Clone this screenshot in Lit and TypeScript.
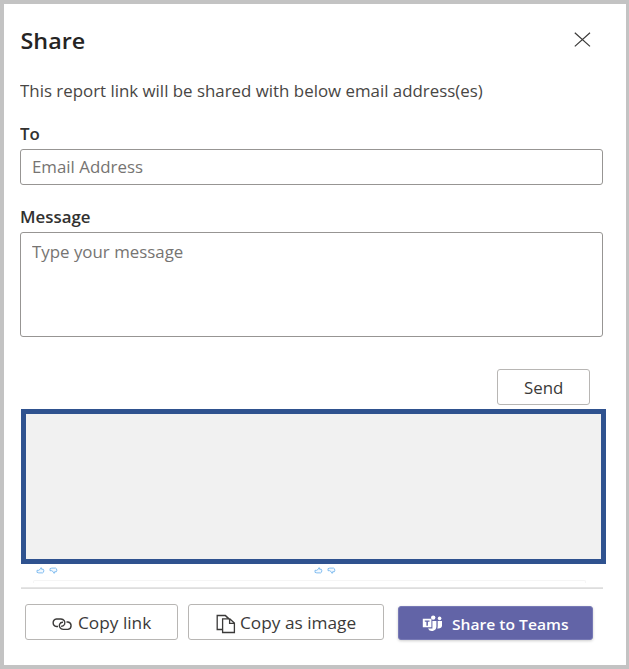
import { LitElement, html, css } from "lit";
import { customElement } from "lit/decorators.js";

@customElement("reaction-thumbs")
class ReactionThumbs extends LitElement {
  static styles = css`
    :host { display: flex; gap: 4px; }
    svg { display: block; width: 9px; height: 7px; fill: #f2f9ff; stroke: #78b8ee; stroke-width: 0.9; }
    .down { transform: rotate(180deg) scaleX(-1); }
  `;
  render() {
    const thumb = "M1 3.3H2.7L4.5 2 4.9.7Q6 .5 5.7 2.3H7.4Q8.2 2.6 7.5 5.2L6.6 5.9H2.8L1 5.4Z";
    return html`
      <svg viewBox="0 0 9 7"><path d=${thumb} /></svg>
      <svg class="down" viewBox="0 0 9 7"><path d=${thumb} /></svg>
    `;
  }
}

@customElement("app-root")
class AppRoot extends LitElement {
  static styles = css`
    :host {
      display: block;
      font-family: "Open Sans", "Noto Sans", sans-serif;
      font-size: 15.4px;
      color: #484644;
    }
    * { box-sizing: border-box; }
    svg { display: block; flex: none; }
    .wide { display: inline-block; transform: scaleX(1.096); transform-origin: 0 50%; white-space: nowrap; }
    .dialog {
      width: 629px;
      height: 669px;
      padding: 20px 0 0 16px;
      background: #fff;
      border: solid #c3c3c3;
      border-width: 4px 3px 4px 4px;
      display: flex;
      flex-direction: column;
      overflow: hidden;
    }
    .head {
      display: flex;
      justify-content: space-between;
      width: 571px;
      height: 32px;
      flex: none;
    }
    h1 {
      margin: 0;
      padding-left: 0.5px;
      font-size: 22px;
      line-height: 32px;
      font-weight: 600;
      color: #252423;
      transform: scaleX(1.06);
      transform-origin: 0 50%;
    }
    .close { margin-top: 7px; }
    p { margin: 25px 0 0; line-height: 22px; }
    label { display: block; font-weight: 600; line-height: 20px; height: 20px; color: #323130; }
    .to { margin-top: 22px; }
    .msg { margin-top: 23px; }
    .field {
      width: 583px;
      border: 1px solid #979593;
      border-radius: 3px;
      padding: 0 11px;
      color: #767472;
      flex: none;
    }
    .input { height: 36px; line-height: 36px; margin-top: 4px; }
    .area { height: 105px; margin-top: 4px; padding-top: 9px; line-height: 22px; }
    .btn {
      height: 36px;
      display: flex;
      align-items: center;
      border: 1px solid #b8b6b4;
      border-radius: 3px;
      white-space: nowrap;
      flex: none;
      color: #3b3a39;
    }
    .send { width: 93px; margin: 32px 0 0 477px; padding: 2px 0 0 26px; }
    .preview {
      width: 585px;
      height: 155px;
      flex: none;
      margin: 4px 0 0 1px;
      background: #f1f1f1;
      border: 5px solid #2f528f;
    }
    .thumbs { display: flex; gap: 256px; margin: 3px 0 0 16px; height: 13px; flex: none; }
    .card { width: 553px; height: 3px; margin-left: 13px; border: 1px solid #f5f5f5; border-bottom: 0; border-radius: 2px 2px 0 0; flex: none; }
    .rule { width: 582px; height: 2px; margin: 4px 0 0 1px; background: linear-gradient(#e9e9e9, #d9d9d9); flex: none; }
    .actions { display: flex; margin: 15px 0 0 5px; flex: none; }
    .link { width: 153px; padding-left: 25px; gap: 4.5px; }
    .link svg { margin-top: 4px; }
    .link .wide, .image .wide { transform: scaleX(1.12); margin-top: 2px; }
    .image { width: 196px; margin-left: 10px; padding-left: 27px; gap: 4px; }
    .image svg { margin-top: 4px; }
    .teams {
      width: 195px;
      height: 34px;
      margin: 2px 0 0 14px;
      padding-left: 22.5px;
      gap: 9px;
      background: #6264a7;
      border-color: #7779b5;
      color: #fff;
      font-size: 14.4px;
      font-weight: 600;
      box-shadow: 0 1px 3px #0003;
    }
    .teams .wide { transform: scaleX(1.085); margin-top: 3px; }
    .teams svg { margin-top: 1px; }
  `;

  render() {
    return html`
      <div class="dialog">
        <div class="head">
          <h1>Share</h1>
          <svg class="close" width="18" height="17" viewBox="0 0 18 17" fill="none" stroke="#3b3a39" stroke-width="1.2"><path d="M1.8 1.8 17 15.4M17 1.8 1.8 15.4" /></svg>
        </div>
        <p><span class="wide">This report link will be shared with below email address(es)</span></p>
        <label class="to"><span class="wide">To</span></label>
        <div class="field input"><span class="wide">Email Address</span></div>
        <label class="msg"><span class="wide">Message</span></label>
        <div class="field area"><span class="wide">Type your message</span></div>
        <div class="btn send"><span class="wide">Send</span></div>
        <div class="preview"></div>
        <div class="thumbs"><reaction-thumbs></reaction-thumbs><reaction-thumbs></reaction-thumbs></div>
        <div class="card"></div>
        <div class="rule"></div>
        <div class="actions">
          <div class="btn link">
            <svg width="22" height="14" viewBox="0 0 22 14" fill="none" stroke="#3b3a39" stroke-width="1.4">
              <path d="M7 9.5H5.5A4 3.8 0 0 1 5.5 2H10A4 3.8 0 0 1 13.6 7.2Q12.6 9.4 10.2 9.2" />
              <path d="M15.5 5H17A4 3.8 0 0 1 17 12.4H12.2A4 3.8 0 0 1 8.6 7.2Q9.6 5 12 5.2" />
            </svg>
            <span class="wide">Copy link</span>
          </div>
          <div class="btn image">
            <svg width="20" height="20" viewBox="0 0 20 20" fill="none" stroke="#3b3a39" stroke-width="1.3">
              <path d="M6.3 15.5H1.2V1.5H9.4L13 4.8M9.2 1.5 12.6 4.8" />
              <path d="M6.6 4.9H13.9L18.4 9V18.5H6.6ZM13.6 5V9.3H18.4" />
            </svg>
            <span class="wide">Copy as image</span>
          </div>
          <div class="btn teams">
            <svg width="21" height="17" viewBox="0 0 21 17" fill="#fff">
              <circle cx="11.2" cy="2.6" r="2.2" />
              <circle cx="17.6" cy="3.4" r="1.8" />
              <path d="M10.4 6.1H14.4V11.8A4.4 4.4 0 0 1 6 13.4H10.4ZM15.7 6.1H20V10.8Q19.6 14 15.2 13.5Q15.7 12.5 15.7 11Z" />
              <path fill-rule="evenodd" d="M.8 3.8H9.4V12.2H.8ZM2.8 5.4V6.8H4.4V10.8H5.9V6.8H7.5V5.4Z" />
            </svg>
            <span class="wide">Share to Teams</span>
          </div>
        </div>
      </div>
    `;
  }
}
